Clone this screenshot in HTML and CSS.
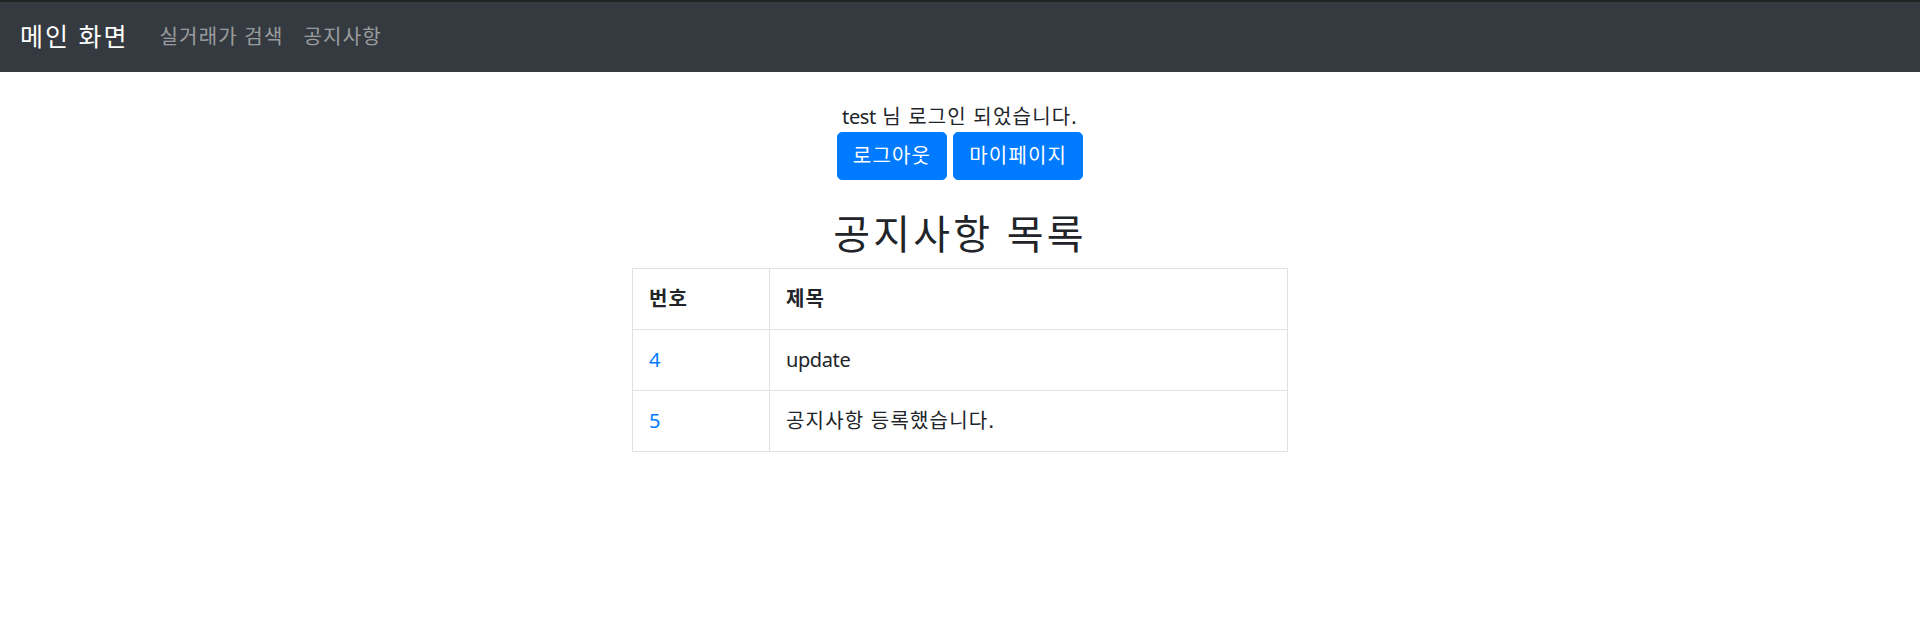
FILE: index.html
```html
<!DOCTYPE html>
<html lang="ko">
<head>
<meta charset="utf-8">
<title>공지사항 목록</title>
<link rel="stylesheet" href="styles.css">
</head>
<body>
<nav class="navbar">
  <a class="brand" href="#">메인 화면</a>
  <ul class="nav">
    <li><a class="nav-link" href="#">실거래가 검색</a></li>
    <li><a class="nav-link" href="#">공지사항</a></li>
  </ul>
</nav>
<main class="content">
  <p class="greeting"><span class="en">test</span> 님 로그인 되었습니다.</p>
  <div class="actions">
    <button class="btn" type="button">로그아웃</button>
    <button class="btn" type="button">마이페이지</button>
  </div>
  <h2 class="title">공지사항 목록</h2>
  <table class="table">
    <thead>
      <tr><th class="col-num">번호</th><th>제목</th></tr>
    </thead>
    <tbody>
      <tr><td><a href="#">4</a></td><td><span class="en">update</span></td></tr>
      <tr><td><a href="#">5</a></td><td>공지사항 등록했습니다.</td></tr>
    </tbody>
  </table>
</main>
</body>
</html>
```

FILE: styles.css
```css
* { box-sizing: border-box; }

body {
  margin: 0;
  font-family: "Noto Sans", "Noto Sans CJK KR", sans-serif;
  font-size: 20px;
  line-height: 1.5;
  letter-spacing: 0.06em;
  color: #212529;
  background: #fff;
}

.en { letter-spacing: -0.02em; }

a { text-decoration: none; }

.navbar {
  display: flex;
  align-items: center;
  height: 72px;
  padding: 0 20px;
  background: #343a40;
  border-top: 2px solid #222426;
}

.brand {
  color: #fff;
  font-size: 25px;
  line-height: 1.5;
  letter-spacing: 0.08em;
  margin-right: 21px;
}

.nav {
  display: flex;
  list-style: none;
  margin: 0;
  padding: 0;
}

.nav-link {
  display: block;
  padding: 10px;
  color: rgba(255, 255, 255, 0.5);
  font-size: 20px;
}

.content {
  display: flex;
  flex-direction: column;
  align-items: center;
  padding-top: 30px;
}

.greeting {
  margin: 0;
  line-height: 30px;
}

.actions {
  display: flex;
  gap: 6px;
}

.btn {
  font-family: inherit;
  font-size: 20px;
  line-height: 30px;
  letter-spacing: 0.06em;
  padding: 8px 15px;
  color: #fff;
  background: #007bff;
  border: 1px solid #007bff;
  border-radius: 5px;
  cursor: pointer;
}

.title {
  margin: 30px 0 10px;
  font-size: 40px;
  font-weight: 400;
  line-height: 1.2;
  letter-spacing: 0.08em;
}

.table {
  width: 656px;
  border-collapse: collapse;
}

.table th,
.table td {
  border: 1px solid #dee2e6;
  padding: 15px 16px;
  text-align: left;
  line-height: 30px;
}

.table th { font-weight: 700; }

.col-num { width: 137px; }

.table a { color: #007bff; }
```
